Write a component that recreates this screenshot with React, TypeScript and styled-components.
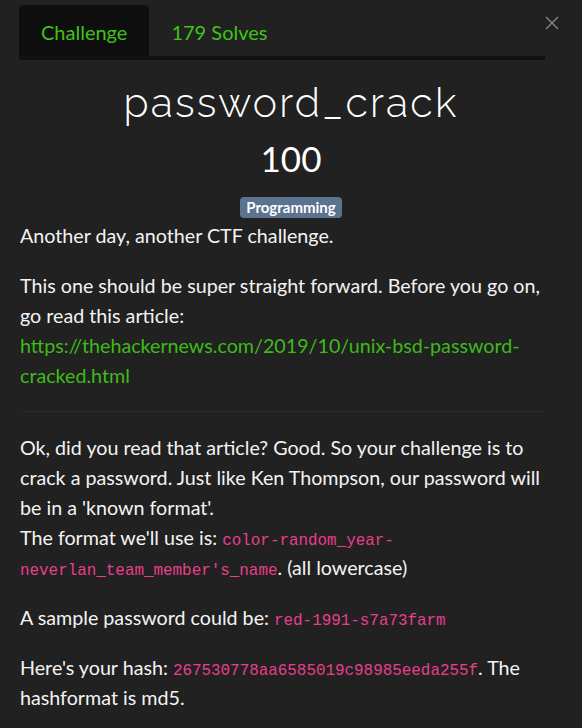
import React from "react";
import styled, { createGlobalStyle } from "styled-components";

const Global = createGlobalStyle`
  html, body { margin: 0; padding: 0; background: #212121; }
  body { font-family: Lato, "Noto Sans", sans-serif; color: #f0f0f0; }
`;

const Modal = styled.div`
  position: relative;
  padding: 5px 20px 20px 20px;
  box-sizing: border-box;
  width: 582px;
  min-height: 728px;
  background: #212121;
`;

const TabBar = styled.div`
  display: flex;
  margin: 0 17px 0 -1px;
  border-bottom: 4px solid #111111;
`;

const Tab = styled.div<{ $active?: boolean }>`
  height: 51px;
  line-height: 55px;
  padding: 0 22px;
  font-size: 20px;
  color: #3fc31a;
  background: ${(p) => (p.$active ? "#0e0e0e" : "transparent")};
  border-radius: 5px 5px 0 0;
`;

const Close = styled.button`
  position: absolute;
  top: 14px;
  right: 21px;
  width: 18px;
  height: 18px;
  padding: 0;
  border: none;
  background: transparent;
  display: flex;
  align-items: center;
  justify-content: center;
`;

const Title = styled.h1`
  margin: 18px 0 0;
  text-align: center;
  font-family: Raleway, Lato, sans-serif;
  font-weight: 300;
  font-size: 41px;
  line-height: 50px;
  letter-spacing: 2.2px;
  color: #ffffff;
`;

const Points = styled.div`
  text-align: center;
  font-size: 35px;
  line-height: 40px;
  color: #ffffff;
  margin-top: 10px;
`;

const BadgeRow = styled.div`
  display: flex;
  justify-content: center;
  margin-top: 19px;
`;

const Badge = styled.span`
  background: #5b7291;
  color: #fff;
  font-weight: 700;
  font-size: 15px;
  line-height: 21px;
  padding: 0 6px;
  border-radius: 4px;
`;

const Body = styled.div`
  margin: 3px 17px 0 0;
  font-size: 19.7px;
  line-height: 30px;
  color: #f3f3f3;
`;

const P = styled.p`
  margin: 0 0 20px;
`;

const Link = styled.a`
  color: #3fb91a;
  text-decoration: none;
`;

const Rule = styled.hr`
  border: none;
  border-top: 1px solid #2a2a2a;
  margin: 17px 0 21px;
`;

const Code = styled.code`
  font-family: "Liberation Mono", "DejaVu Sans Mono", monospace;
  font-size: 15.9px;
  line-height: 1;
  color: #e83e8c;
`;

export default function App() {
  return (
    <>
      <Global />
      <Modal>
        <TabBar>
          <Tab $active>Challenge</Tab>
          <Tab>179 Solves</Tab>
        </TabBar>
        <Close aria-label="Close">
          <svg width="14" height="14" viewBox="0 0 14 14">
            <path d="M1 1 L13 13 M13 1 L1 13" stroke="#8a8a8a" strokeWidth="1.3" />
          </svg>
        </Close>
        <Title>password_crack</Title>
        <Points>100</Points>
        <BadgeRow>
          <Badge>Programming</Badge>
        </BadgeRow>
        <Body>
          <P>Another day, another CTF challenge.</P>
          <P>
            This one should be super straight forward. Before you go on, go read this article:
            <br />
            <Link href="#">https://thehackernews.com/2019/10/unix-bsd-password-cracked.html</Link>
          </P>
          <Rule />
          <P>
            Ok, did you read that article? Good. So your challenge is to crack a password. Just like
            Ken Thompson, our password will be in a 'known format'.
            <br />
            The format we'll use is: <Code>color-random_year-neverlan_team_member's_name</Code>. (all
            lowercase)
          </P>
          <P>
            A sample password could be: <Code>red-1991-s7a73farm</Code>
          </P>
          <P>
            Here's your hash: <Code>267530778aa6585019c98985eeda255f</Code>. The hashformat is md5.
          </P>
        </Body>
      </Modal>
    </>
  );
}
